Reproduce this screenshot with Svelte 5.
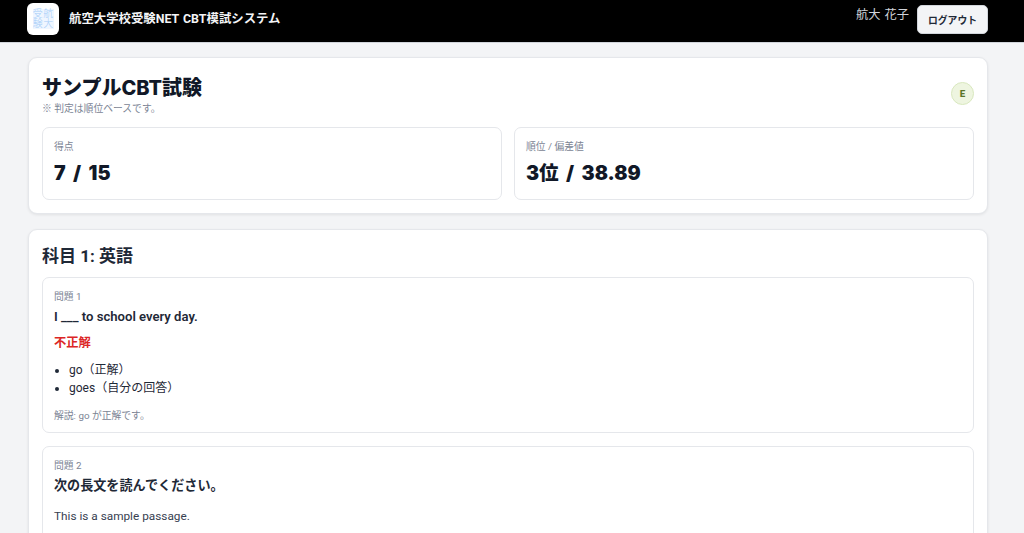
<script>
  const stats = [
    { label: '得点', value: '7 / 15' },
    { label: '順位 / 偏差値', value: '3位 / 38.89' }
  ];
</script>

<header class="topbar">
  <div class="brand">
    <div class="logo"><span>受</span><span>航</span><span>験</span><span>大</span></div>
    <div class="site">航空大学校受験NET CBT模試システム</div>
  </div>
  <div class="user">
    <span class="name">航大 花子</span>
    <button class="logout">ログアウト</button>
  </div>
</header>

<main class="page">
  <section class="card">
    <div class="head">
      <div>
        <h1>サンプルCBT試験</h1>
        <p class="note"><span class="mark">※</span> 判定は順位ベースです。</p>
      </div>
      <div class="badge">E</div>
    </div>
    <div class="stats">
      {#each stats as s}
        <div class="stat">
          <div class="label">{s.label}</div>
          <div class="value">{s.value}</div>
        </div>
      {/each}
    </div>
  </section>

  <section class="card">
    <h2>科目 1: 英語</h2>
    <div class="questions">
      <article class="q">
        <div class="label">問題 1</div>
        <div class="qtext">I ___ to school every day.</div>
        <div class="wrong">不正解</div>
        <ul>
          <li>go（正解）</li>
          <li>goes（自分の回答）</li>
        </ul>
        <div class="exp">解説: go が正解です。</div>
      </article>
      <article class="q">
        <div class="label">問題 2</div>
        <div class="qtext">次の長文を読んでください。</div>
        <p class="passage">This is a sample passage.</p>
      </article>
    </div>
  </section>
</main>

<style>
  :global(body) {
    margin: 0;
    background: #f3f4f6;
    color: #1f2937;
    font-family: Roboto, "Noto Sans CJK JP", sans-serif;
  }
  .topbar {
    height: 42px;
    background: #000;
    border-bottom: 1px solid #d1d5db;
    display: flex;
    justify-content: space-between;
    padding: 0 36px 0 27px;
  }
  .brand {
    display: flex;
    align-items: flex-start;
    gap: 10px;
    padding-top: 3px;
  }
  .logo {
    width: 32px;
    height: 32px;
    box-sizing: border-box;
    background: #fff;
    border-radius: 6px;
    padding: 6px 5.5px;
    display: grid;
    grid-template-columns: 1fr 1fr;
    grid-template-rows: 1fr 1fr;
    font-size: 10px;
    line-height: 10px;
    font-weight: 300;
    color: #a5cdf8;
    text-align: center;
  }
  .logo span {
    background: #eff6ff;
  }
  .site {
    color: #f3f4f6;
    font-size: 12.4px;
    font-weight: 700;
    line-height: 32px;
    word-spacing: 1px;
  }
  .user {
    display: flex;
    gap: 8px;
    align-items: flex-start;
    padding-top: 5px;
  }
  .name {
    color: #d1d5db;
    font-size: 12.25px;
    line-height: 20px;
    word-spacing: 1px;
  }
  .logout {
    width: 71px;
    height: 29px;
    padding: 0;
    border: 1px solid #d1d5db;
    border-radius: 5px;
    background: #f3f4f6;
    color: #1f2937;
    font: 700 9.8px Roboto, "Noto Sans CJK JP", sans-serif;
  }
  .page {
    width: 960px;
    margin: 14px 0 0 28px;
    display: flex;
    flex-direction: column;
    gap: 15px;
    padding-bottom: 20px;
  }
  .card {
    background: #fff;
    border: 1px solid #e5e7eb;
    border-radius: 9px;
    box-shadow: 0 1px 3px rgba(0, 0, 0, 0.08);
    padding: 13px;
  }
  .head {
    display: flex;
    justify-content: space-between;
    align-items: center;
  }
  h1 {
    margin: 2px 0 -2px;
    font-family: Inter, "Noto Sans CJK JP", sans-serif;
    font-size: 20px;
    line-height: 30px;
    font-weight: 800;
    color: #111827;
  }
  .note {
    margin: 0;
    height: 14px;
    font-size: 9.8px;
    line-height: 14px;
    color: #7b8494;
  }
  .mark {
    font-family: "Noto Sans CJK JP", sans-serif;
  }
  .badge {
    width: 21px;
    height: 21px;
    border-radius: 50%;
    background: #eef5e0;
    border: 1px solid #d9e8bf;
    color: #5a7529;
    font-size: 9.8px;
    font-weight: 800;
    display: flex;
    align-items: center;
    justify-content: center;
  }
  .stats {
    display: grid;
    grid-template-columns: 1fr 1fr;
    gap: 12px;
    margin-top: 12px;
  }
  .stat {
    border: 1px solid #e5e7eb;
    border-radius: 7px;
    padding: 11px;
    height: 49px;
  }
  .label {
    font-size: 9.8px;
    line-height: 16px;
    color: #7b8494;
  }
  .value {
    margin-top: 4px;
    font-family: Inter, "Noto Sans CJK JP", sans-serif;
    font-size: 19.6px;
    line-height: 28px;
    font-weight: 900;
    word-spacing: 3.5px;
    color: #111827;
  }
  h2 {
    margin: 1px 0 9px;
    font-size: 17px;
    line-height: 24px;
    font-weight: 700;
    color: #1f2937;
  }
  .questions {
    display: flex;
    flex-direction: column;
    gap: 13px;
  }
  .q {
    border: 1px solid #e5e7eb;
    border-radius: 7px;
    padding: 11px 11px 9px;
  }
  .qtext {
    margin-top: 2px;
    font-size: 13.1px;
    line-height: 20px;
    font-weight: 600;
  }
  .wrong {
    margin-top: 7px;
    font-size: 12.25px;
    line-height: 18px;
    font-weight: 700;
    color: #dc2626;
  }
  ul {
    margin: 9px 0 0;
    padding-left: 15px;
    font-size: 12px;
    line-height: 18px;
  }
  .exp {
    margin-top: 12px;
    font-size: 9.8px;
    line-height: 14px;
    color: #7b8494;
  }
  .passage {
    margin: 11px 0 60px;
    font-size: 11.8px;
    line-height: 18px;
    color: #374151;
  }
</style>
